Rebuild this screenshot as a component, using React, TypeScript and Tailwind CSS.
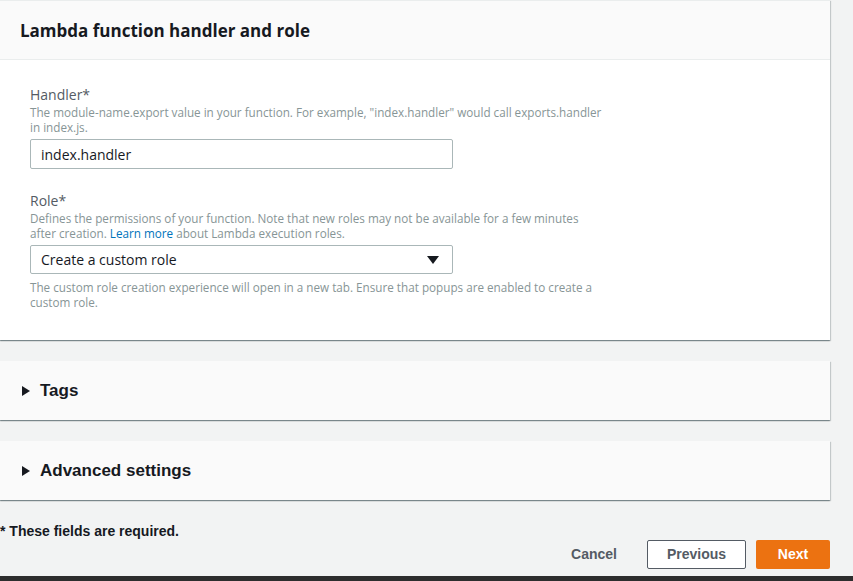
import React from "react";

const body = { fontFamily: '"Open Sans", "Noto Sans", sans-serif' };
const cond = { fontFamily: '"Liberation Sans", Arial, sans-serif' };

const cardShadow =
  "shadow-[0_1px_1px_0_rgba(0,28,36,0.3),1px_1px_1px_0_rgba(0,28,36,0.15),-1px_1px_1px_0_rgba(0,28,36,0.15)]";

function Collapsed({ title }: { title: string }) {
  return (
    <div className={`h-[59px] bg-[#fafafa] ${cardShadow} flex items-center pl-[22px]`}>
      <svg width="8" height="10" viewBox="0 0 8 10" className="mr-[10px]">
        <path d="M0 0 L8 5 L0 10 Z" fill="#16191f" />
      </svg>
      <span className="text-[17px] font-bold text-[#16191f]" style={cond}>
        {title}
      </span>
    </div>
  );
}

export default function App() {
  return (
    <div className="min-h-[581px] bg-[#f2f3f3] flex flex-col" style={body}>
      <div className="w-[830px]">
        <div className={`bg-white border-t border-[#eaeded] ${cardShadow}`}>
          <div className="h-[59px] bg-[#fafafa] border-b border-[#eaeded] flex items-center px-5 pt-[2px]">
            <h2 className="text-[17px] font-bold text-[#16191f]">Lambda function handler and role</h2>
          </div>
          <div className="px-[30px] pt-[25px] pb-[30px]">
            <div className="text-[14px] leading-[20px] text-[#545b64]">Handler*</div>
            <div className="text-[11.7px] leading-[15px] text-[#879596]">
              The module-name.export value in your function. For example, "index.handler" would call exports.handler
              <br />
              in index.js.
            </div>
            <div className="mt-[4px] w-[423px] h-[30px] border border-[#aab7b8] rounded-[2px] flex items-center px-[10px] text-[14px] text-[#16191f]">
              index.handler
            </div>
            <div className="mt-[22px] text-[14px] leading-[20px] text-[#545b64]">Role*</div>
            <div className="text-[11.7px] leading-[15px] text-[#879596]">
              Defines the permissions of your function. Note that new roles may not be available for a few minutes
              <br />
              after creation. <span className="text-[#0073bb]">Learn more</span> about Lambda execution roles.
            </div>
            <div className="mt-[4px] w-[423px] h-[29px] border border-[#aab7b8] rounded-[2px] flex items-center justify-between pl-[10px] pr-[13px] text-[14px] text-[#16191f]">
              <span>Create a custom role</span>
              <svg width="12" height="8" viewBox="0 0 12 8">
                <path d="M0 0 L12 0 L6 8 Z" fill="#16191f" />
              </svg>
            </div>
            <div className="mt-[6px] text-[11.7px] leading-[15px] text-[#879596]">
              The custom role creation experience will open in a new tab. Ensure that popups are enabled to create a
              <br />
              custom role.
            </div>
          </div>
        </div>

        <div className="mt-[21px]">
          <Collapsed title="Tags" />
        </div>
        <div className="mt-[21px]">
          <Collapsed title="Advanced settings" />
        </div>

        <div className="mt-[21px] text-[14px] font-bold text-[#16191f] leading-[20px]" style={cond}>
          * These fields are required.
        </div>
        <div className="mt-[-1px] flex items-center justify-end gap-[10px]" style={cond}>
          <button className="h-[29px] px-[20px] text-[14px] font-bold text-[#545b64]">Cancel</button>
          <button className="h-[29px] w-[99px] border border-[#545b64] bg-white rounded-[2px] text-[14px] font-bold text-[#545b64]">
            Previous
          </button>
          <button className="h-[29px] w-[74px] bg-[#ec7211] rounded-[2px] text-[14px] font-bold text-white">
            Next
          </button>
        </div>
      </div>
      <div className="mt-auto h-[5px] bg-[#2d2d2d]" />
    </div>
  );
}
